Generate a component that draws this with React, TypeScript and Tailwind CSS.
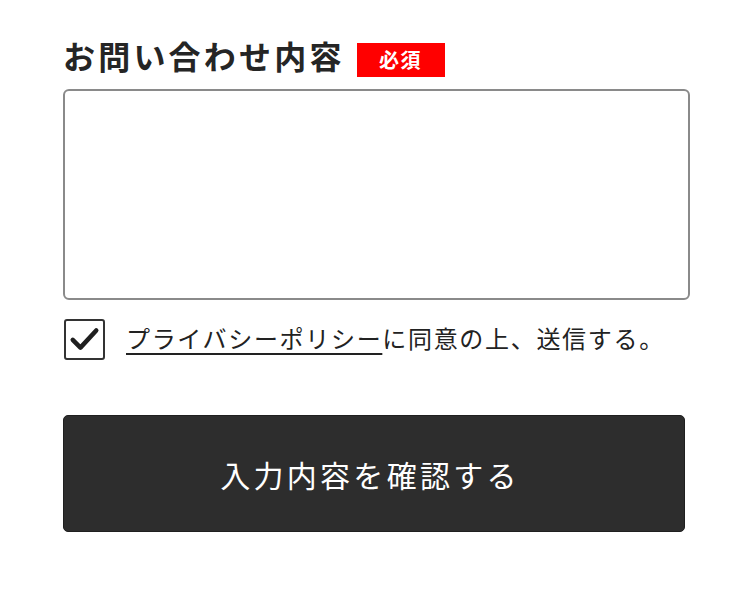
const font = "font-['Noto_Sans_CJK_JP','Noto_Sans',sans-serif]";

export default function App() {
  return (
    <div className={`h-[611px] w-[748px] bg-white pl-[63px] pt-[39px] text-[#222] ${font}`}>
      <div className="flex items-start gap-[12px]">
        <h2 className="text-[32px] font-bold leading-none tracking-[0.1em] text-[#252525]">
          お問い合わせ内容
        </h2>
        <span className="mt-[4px] flex h-[34px] w-[88px] items-center justify-center bg-[#ff0000] text-[20px] font-bold leading-none tracking-[0.08em] text-white">
          必須
        </span>
      </div>

      <textarea
        className="mt-[12px] block h-[211px] w-[627px] resize-none rounded-[6px] border-2 border-[#8a8a8a] bg-white outline-none"
        aria-label="お問い合わせ内容"
      />

      <label className="mt-[19px] ml-[1px] flex items-center gap-[21px]">
        <span className="flex h-[41px] w-[41px] items-center justify-center rounded-[3px] border-2 border-[#333] bg-white">
          <svg viewBox="0 0 41 41" className="h-[41px] w-[41px]" fill="none" aria-hidden>
            <path
              d="M7.5 21 16 29.5 33.5 10.5"
              stroke="#1f1f1f"
              strokeWidth={5}
              strokeLinecap="round"
              strokeLinejoin="round"
            />
          </svg>
        </span>
        <span className="mb-[4px] text-[24px] leading-none tracking-[0.07em] text-[#222]">
          <span className="underline decoration-[1.5px] underline-offset-[5px]">プライバシーポリシー</span>
          に同意の上、送信する。
        </span>
      </label>

      <button
        type="button"
        className="mt-[55px] flex h-[117px] w-[622px] items-center justify-center rounded-[5px] border border-[#1f1f1f] bg-[#2d2d2d] pr-[8px] text-[30px] leading-none tracking-[0.11em] text-white"
      >
        入力内容を確認する
      </button>
    </div>
  );
}
